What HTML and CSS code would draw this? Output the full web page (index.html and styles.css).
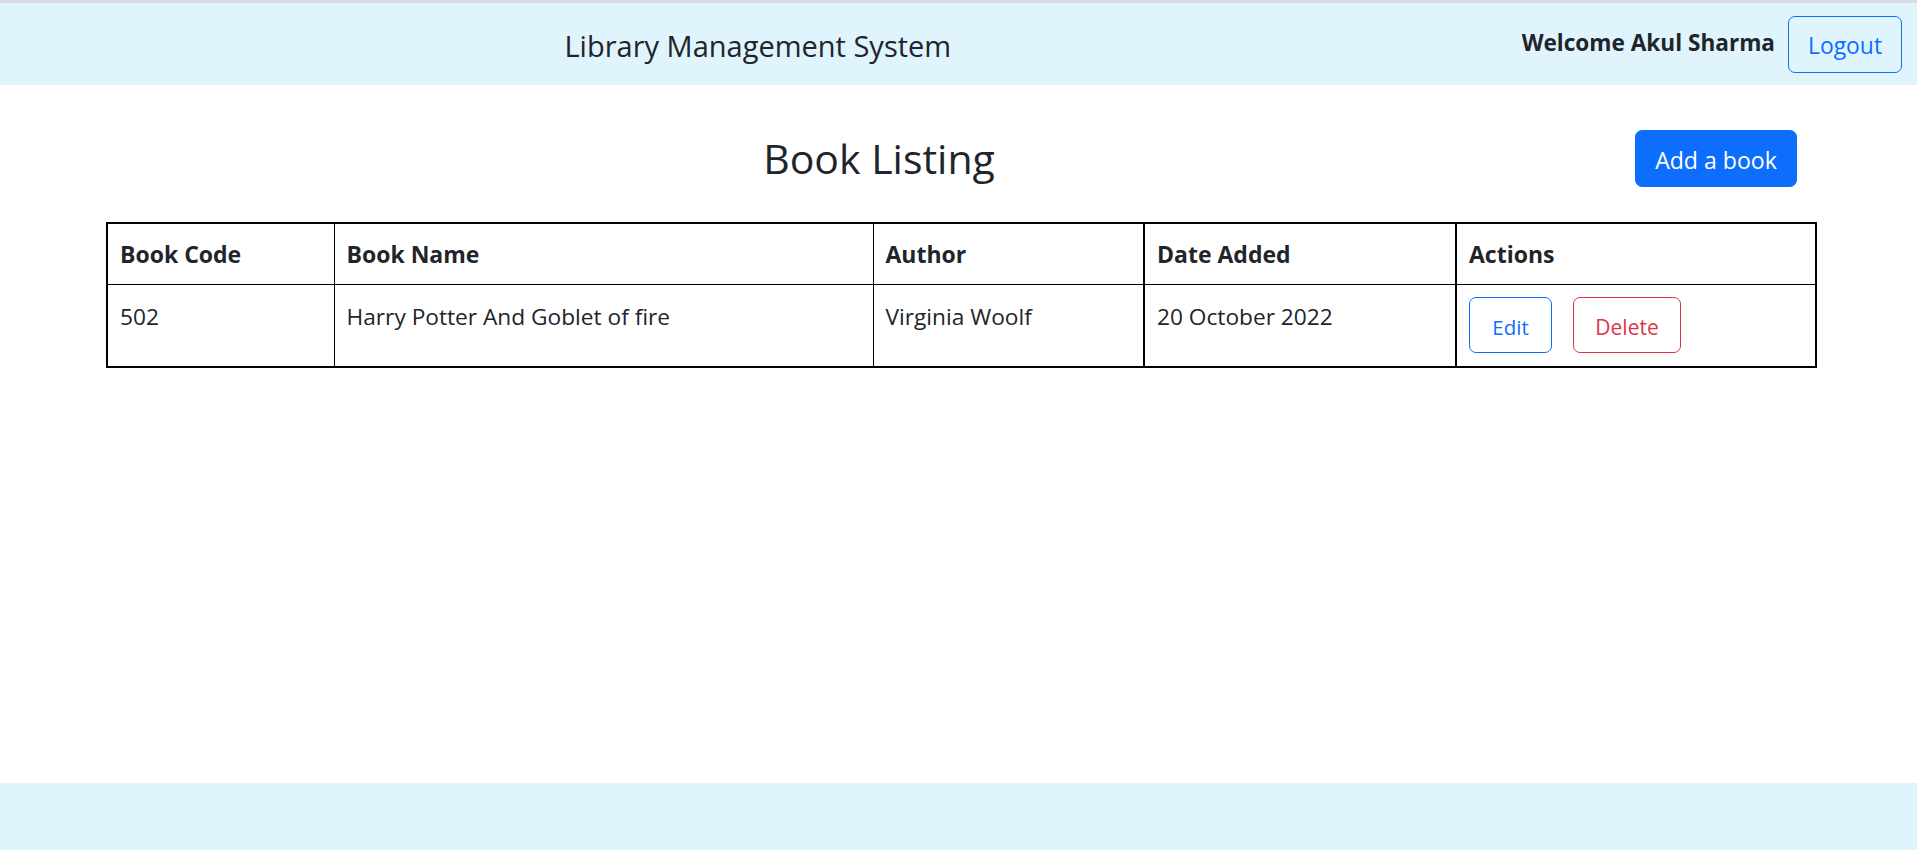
FILE: index.html
```html
<!DOCTYPE html>
<html lang="en">
<head>
<meta charset="utf-8">
<title>Library Management System</title>
<link rel="stylesheet" href="styles.css">
</head>
<body>
<div class="topline"></div>
<nav class="navbar">
  <div class="brand">Library Management System</div>
  <div class="welcome">Welcome Akul Sharma</div>
  <button class="btn btn-outline-primary btn-logout">Logout</button>
</nav>
<main class="main">
  <div class="title-row">
    <h2 class="title">Book Listing</h2>
    <button class="btn btn-primary btn-add">Add a book</button>
  </div>
  <table class="books">
    <colgroup>
      <col class="c1"><col class="c2"><col class="c3"><col class="c4"><col class="c5">
    </colgroup>
    <thead>
      <tr><th>Book Code</th><th>Book Name</th><th>Author</th><th class="thick">Date Added</th><th class="thick">Actions</th></tr>
    </thead>
    <tbody>
      <tr>
        <td>502</td>
        <td>Harry Potter And Goblet of fire</td>
        <td>Virginia Woolf</td>
        <td class="thick">20 October 2022</td>
        <td class="thick actions"><button class="btn btn-outline-primary btn-edit">Edit</button><button class="btn btn-outline-danger btn-del">Delete</button></td>
      </tr>
    </tbody>
  </table>
</main>
<footer class="footer"></footer>
</body>
</html>
```
FILE: styles.css
```css
* { box-sizing: border-box; }
html, body { margin: 0; padding: 0; }
body {
  font-family: "Open Sans", "Noto Sans", sans-serif;
  font-size: 22.7px;
  line-height: 1.5;
  color: #212529;
  background: #fff;
  min-height: 850px;
  display: flex;
  flex-direction: column;
}
.topline { height: 3px; background: #d9dde2; }
.navbar {
  height: 82px;
  background: #dff4fd;
  display: flex;
  align-items: center;
  padding-right: 15px;
}
.brand {
  flex: 1;
  text-align: center;
  font-size: 29px;
  line-height: 1.2;
  padding-top: 4px;
}
.welcome {
  font-weight: 700;
  font-size: 22.6px;
  margin-left: 6px;
  line-height: 1.2;
  padding-bottom: 2px;
}
.btn {
  font-family: inherit;
  background: transparent;
  border: 1px solid transparent;
  border-radius: 7px;
  cursor: pointer;
  line-height: 1;
  padding: 4px 0 0 0;
  display: inline-flex;
  align-items: center;
  justify-content: center;
}
.btn-outline-primary { color: #0d6efd; border-color: #0d6efd; }
.btn-outline-danger { color: #dc3545; border-color: #dc3545; }
.btn-primary { background: #0d6efd; border-color: #0d6efd; color: #fff; }
.btn-logout { margin-left: 13px; width: 114px; height: 57px; font-size: 22.9px; }
.main { flex: 1; }
.title-row {
  display: flex;
  align-items: center;
  margin: 45px 120px 0 123px;
}
.title {
  flex: 1;
  text-align: center;
  margin: 0;
  font-size: 41px;
  font-weight: 500;
  line-height: 1.2;
}
.btn-add { width: 162px; height: 57px; font-size: 23.1px; }
.books {
  margin: 35px 0 0 106px;
  width: 1709px;
  table-layout: fixed;
  border-collapse: collapse;
  border: 2px solid #000;
  line-height: 28px;
}
.c1 { width: 227px; } .c2 { width: 539px; } .c3 { width: 271px; } .c4 { width: 312px; } .c5 { width: 360px; }
.books th, .books td {
  border: 1px solid #000;
  padding: 16px 12px;
  text-align: left;
  vertical-align: top;
}
.books th { font-weight: 700; font-size: 23px; }
.books td { padding-top: 18px; }
.books .thick { border-left-width: 2px; }
.books td.actions { padding: 12px 12px 13px 12px; }
.btn-edit { width: 83px; height: 56px; font-size: 20.5px; }
.btn-del { width: 108px; height: 56px; font-size: 21px; margin-left: 21px; }
.footer { height: 67px; background: #dff4fd; }
```
